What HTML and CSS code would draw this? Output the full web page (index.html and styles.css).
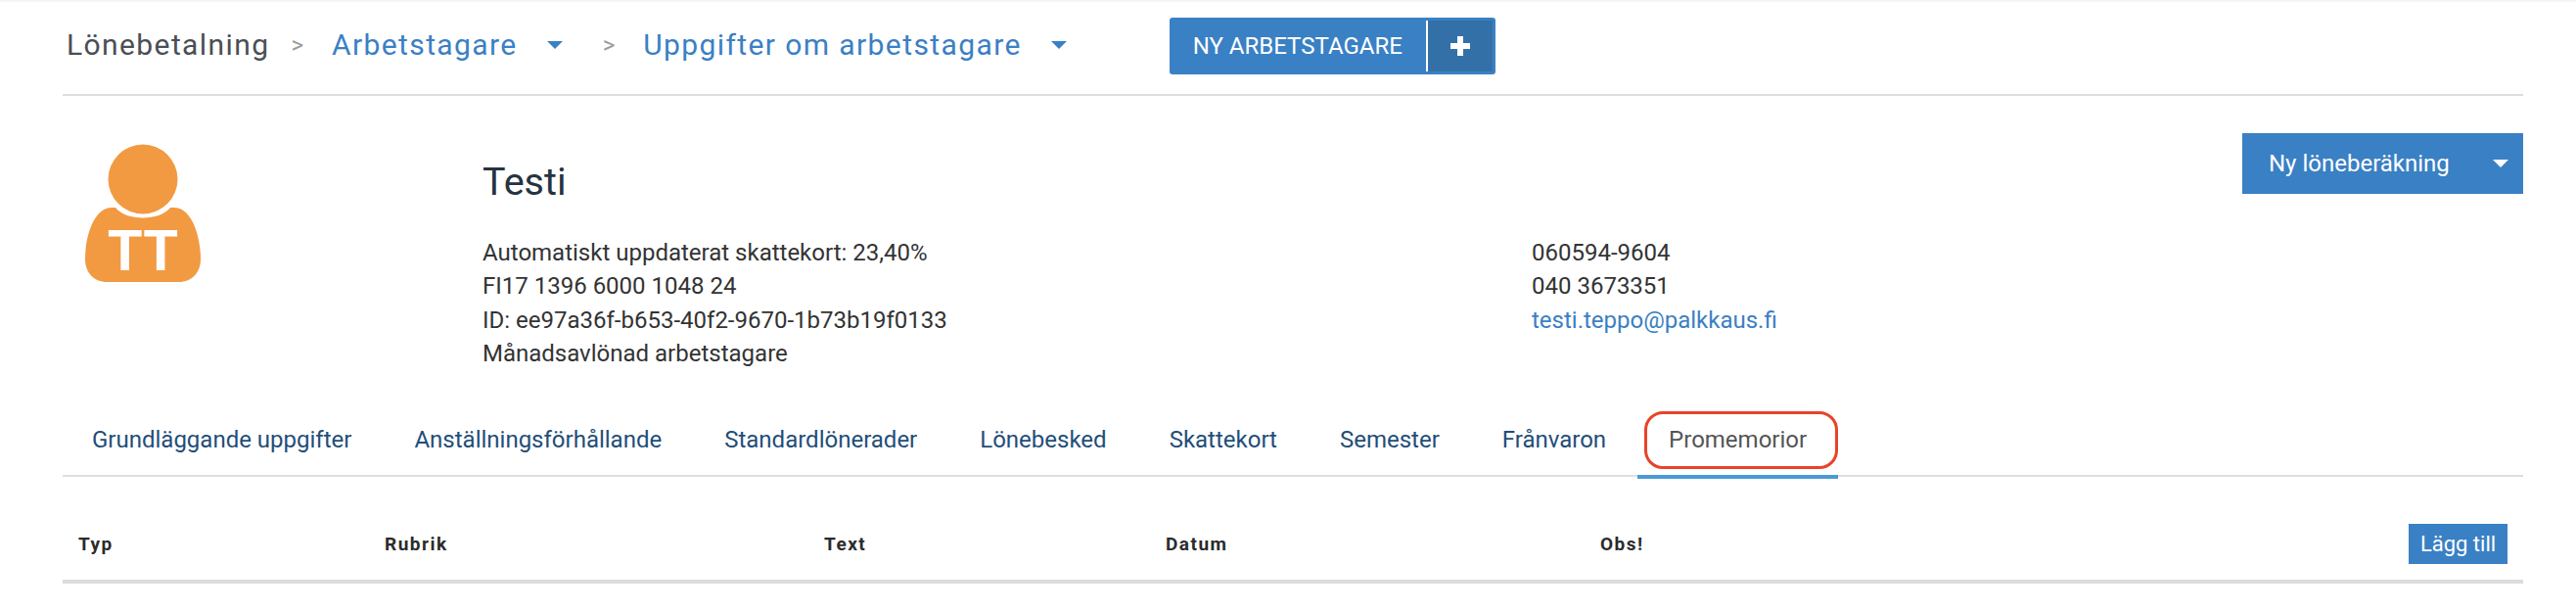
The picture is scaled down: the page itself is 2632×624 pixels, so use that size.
FILE: index.html
```html
<!DOCTYPE html>
<html lang="en">

<head>
    <meta charset="UTF-8">
    <meta name="viewport" content="width=device-width, initial-scale=1.0">
    <title>Promemorior</title>
    <link rel="stylesheet" href="styles.css">
</head>

<body>
    <div id="page">
        <!-- breadcrumb -->
        <div class="topBar">
            <span class="crumb">Lönebetalning</span>
            <span class="sep sepFirst">&gt;</span>
            <a href="#" class="crumbLink">Arbetstagare</a>
            <span class="caret"></span>
            <span class="sep">&gt;</span>
            <a href="#" class="crumbLink">Uppgifter om arbetstagare</a>
            <span class="caret"></span>
            <div class="newBtn">
                <span class="newBtnText">NY ARBETSTAGARE</span>
                <span class="newBtnPlus">
                    <svg width="20" height="20" viewBox="0 0 20 20">
                        <path d="M7 0h6v7h7v6h-7v7H7v-7H0V7h7z" fill="#fff" />
                    </svg>
                </span>
            </div>
        </div>

        <!-- employee info -->
        <div class="info">
            <div class="avatar">
                <svg width="118" height="145" viewBox="0 0 118 145">
                    <circle cx="59" cy="36" r="35.5" fill="#f29a42" />
                    <path d="M31 65 C42 79 76 79 87 65 L91 65 C108 65 118 92 118 118 C118 132 108 141 96 141 L22 141 C10 141 0 132 0 118 C0 92 10 65 27 65 Z" fill="#f29a42" />
                    <text x="59" y="129" class="avatarText" text-anchor="middle">TT</text>
                </svg>
            </div>
            <div class="details">
                <h1 class="name">Testi</h1>
                <div class="columns">
                    <ul class="lines">
                        <li>Automatiskt uppdaterat skattekort: 23,40%</li>
                        <li>FI17 1396 6000 1048 24</li>
                        <li>ID: ee97a36f-b653-40f2-9670-1b73b19f0133</li>
                        <li>Månadsavlönad arbetstagare</li>
                    </ul>
                    <ul class="lines">
                        <li>060594-9604</li>
                        <li>040 3673351</li>
                        <li><a href="#" class="mail">testi.teppo@palkkaus.fi</a></li>
                    </ul>
                </div>
            </div>
            <div class="calcBtn">
                <span>Ny löneberäkning</span>
                <span class="caret caretWhite"></span>
            </div>
        </div>

        <!-- tabs -->
        <ul class="tabs">
            <li><a href="#">Grundläggande uppgifter</a></li>
            <li><a href="#">Anställningsförhållande</a></li>
            <li><a href="#">Standardlönerader</a></li>
            <li><a href="#">Lönebesked</a></li>
            <li><a href="#">Skattekort</a></li>
            <li><a href="#">Semester</a></li>
            <li><a href="#">Frånvaron</a></li>
            <li class="active"><a href="#">Promemorior</a><span class="marker"></span></li>
        </ul>

        <!-- table head -->
        <div class="tableHead">
            <span>Typ</span>
            <span>Rubrik</span>
            <span>Text</span>
            <span>Datum</span>
            <span>Obs!</span>
            <a href="#" class="addBtn">Lägg till</a>
        </div>
    </div>
</body>

</html>
```

FILE: styles.css
```css
/* reset */
* {
    box-sizing: border-box;
}

body {
    margin: 0;
    background: #fff;
    font-family: Roboto, "Liberation Sans", sans-serif;
    color: #2b2b2b;
}

ul {
    list-style: none;
    padding: 0;
    margin: 0;
}

a {
    text-decoration: none;
}

#page {
    height: 624px;
    padding: 0 54px 0 64px;
    overflow: hidden;
    box-shadow: inset 0 3px 3px -2px #ececec;
}

/* breadcrumb */
.topBar {
    display: flex;
    align-items: center;
    height: 98px;
    padding: 0 0 5px 4px;
    border-bottom: 2px solid #dedede;
    font-size: 30px;
    letter-spacing: 1.4px;
}

.crumb {
    color: #4a4f55;
}

.crumbLink {
    color: #3a80c4;
}

.sep {
    margin: 0 29px 0 41px;
    color: #9a9a9a;
    font-size: 24px;
    letter-spacing: 0;
}

.sepFirst {
    margin-left: 22px;
}

.caret {
    width: 0;
    height: 0;
    margin-left: 30px;
    border-style: solid;
    border-width: 8px 8px 0;
    border-color: #3a80c4 transparent transparent;
}

.caretWhite {
    margin-left: 44px;
    border-top-color: #fff;
}

.newBtn {
    display: flex;
    align-items: stretch;
    width: 333px;
    height: 58px;
    margin: 3px 0 0 105px;
    border-radius: 3px;
    background: #3a80c4;
    color: #fff;
    font-size: 24px;
    letter-spacing: 0;
}

.newBtnText {
    display: flex;
    align-items: center;
    justify-content: center;
    width: 264px;
    border-right: 2px solid #fff;
    margin: 3px 0;
}

.newBtnPlus {
    display: flex;
    align-items: center;
    justify-content: center;
    flex: 1;
    margin: 3px 3px 3px 0;
    background: #3470a8;
}

/* employee info */
.info {
    display: flex;
    align-items: flex-start;
    height: 289px;
}

.avatar {
    flex: 0 0 429px;
    height: 289px;
    padding: 49px 0 0 23px;
}

.avatarText {
    font-family: Roboto, "Liberation Sans", sans-serif;
    font-size: 58px;
    font-weight: 700;
    fill: #fff;
}

.details {
    flex: 1;
}

.name {
    height: 143px;
    margin: 0;
    padding-top: 64px;
    font-size: 39.5px;
    font-weight: 400;
    line-height: 48px;
    color: #263340;
}

.columns {
    display: grid;
    grid-template-columns: 1072px 1fr;
}

.lines {
    font-size: 24px;
    line-height: 34.4px;
    color: #333;
}

.mail {
    color: #3a80c4;
}

.calcBtn {
    display: flex;
    align-items: center;
    width: 287px;
    height: 62px;
    margin-top: 38px;
    padding-left: 27px;
    background: #3a80c4;
    color: #fff;
    font-size: 24px;
}

/* tabs */
.tabs {
    display: flex;
    height: 100px;
    border-bottom: 2px solid #dedede;
}

.tabs li {
    position: relative;
    height: 102px;
    padding: 0 32px;
    font-size: 24px;
    line-height: 124px;
}

.tabs li:first-child {
    padding-left: 30px;
}

.tabs a {
    color: #1f4e79;
}

.tabs .active {
    border-bottom: 4px solid #4a9bd4;
}

.tabs .active a {
    color: #555;
}

/* red annotation around the open tab */
.marker {
    position: absolute;
    left: 7px;
    top: 33px;
    width: 198px;
    height: 59px;
    border: 3px solid #e8432a;
    border-radius: 19px;
}

/* table head */
.tableHead {
    display: grid;
    grid-template-columns: 313px 449px 349px 444px 1fr auto;
    align-items: center;
    height: 109px;
    padding: 32px 16px 0;
    border-bottom: 4px solid #dcdcdc;
    font-size: 19px;
    font-weight: 700;
    letter-spacing: 1.5px;
}

.addBtn {
    width: 101px;
    height: 41px;
    background: #3a80c4;
    color: #fff;
    font-size: 22px;
    font-weight: 400;
    letter-spacing: 0;
    line-height: 41px;
    text-align: center;
}
```
